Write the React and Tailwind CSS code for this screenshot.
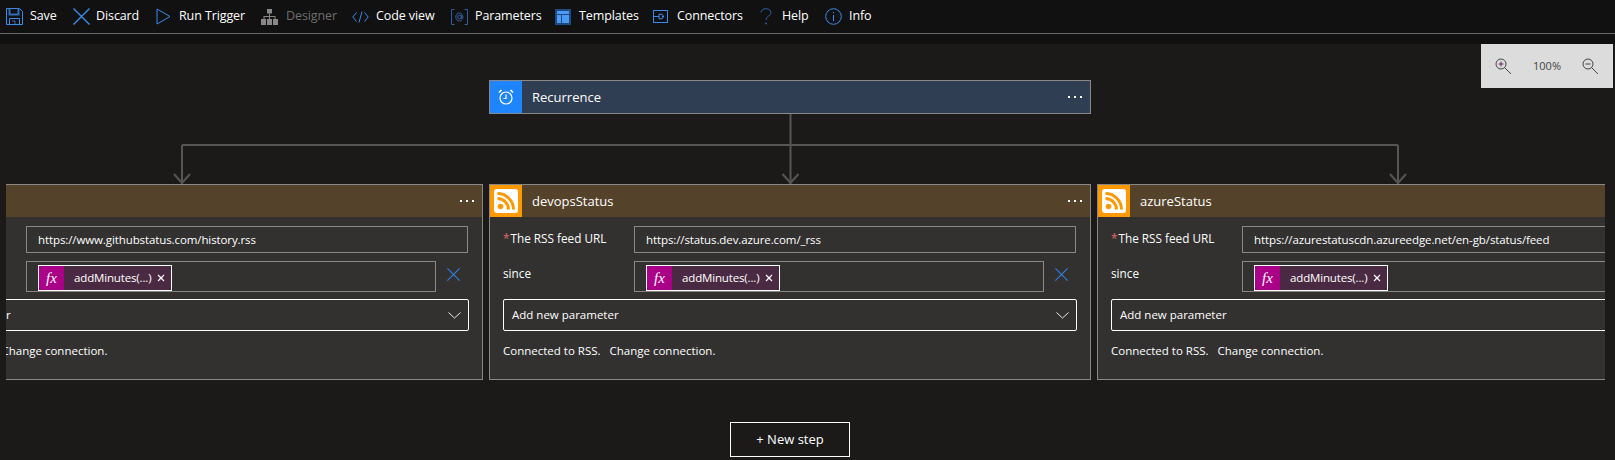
import React from "react";

const font = "font-['Open_Sans','Noto_Sans',sans-serif]";

function SaveIcon() {
  return (
    <svg width="17" height="17" viewBox="0 0 17 17" fill="none" stroke="#3c8aea" strokeWidth="1">
      <path d="M0.5 0.5H13.5L16.5 3.5V16.5H0.5Z" />
      <path d="M3.5 0.5V6.5H12.5V0.5" stroke="#2f6db8" strokeWidth="2" />
      <path d="M3.5 16.5V10.5H13.5V16.5" />
      <path d="M6 13H9V16" stroke="#2f6db8" />
    </svg>
  );
}

function CloseIcon({ size = 17, color = "#3c8aea" }) {
  return (
    <svg width={size} height={size} viewBox="0 0 17 17" stroke={color} strokeWidth="1.4" fill="none">
      <path d="M0.5 0.5L16.5 16.5M16.5 0.5L0.5 16.5" />
    </svg>
  );
}

function RunIcon() {
  return (
    <svg width="15" height="17" viewBox="0 0 15 17" stroke="#3c8aea" fill="none">
      <path d="M1 1L14 8.5L1 16Z" />
    </svg>
  );
}

function DesignerIcon() {
  return (
    <svg width="17" height="16" viewBox="0 0 17 16" fill="#8a8886">
      <rect x="6" y="0" width="5" height="4.5" />
      <rect x="0" y="10" width="5" height="6" />
      <rect x="6" y="10" width="5" height="6" />
      <rect x="12" y="10" width="5" height="6" />
      <path d="M8 4.5H9V7H14.5V10H13.5V8H9V10H8V8H3.5V10H2.5V7H8Z" />
    </svg>
  );
}

function CodeIcon() {
  return (
    <svg width="17" height="12" viewBox="0 0 17 12" stroke="#3c8aea" fill="none">
      <path d="M4.5 1.5L0.8 6L4.5 10.5M12.5 1.5L16.2 6L12.5 10.5M10 0.5L7 11.5" />
    </svg>
  );
}

function ParamsIcon() {
  return (
    <svg width="17" height="16" viewBox="0 0 17 16" stroke="#2f5f9f" fill="none">
      <path d="M3.5 0.5H0.5V15.5H3.5M13.5 0.5H16.5V15.5H13.5" />
      <circle cx="8.5" cy="8" r="1.8" />
      <path d="M10.3 6V9.5C10.3 10.5 12 10.5 12 8.5C12 6 10.5 4 8.5 4C6.3 4 4.8 6 4.8 8C4.8 10.2 6.3 12 8.5 12C9.5 12 10.2 11.7 10.8 11.3" />
    </svg>
  );
}

function TemplatesIcon() {
  return (
    <svg width="16" height="16" viewBox="0 0 16 16">
      <rect width="16" height="16" fill="#1f4a80" />
      <rect x="2" y="2" width="12" height="3" fill="#4a9bf5" />
      <rect x="2" y="6" width="4" height="8" fill="#4a9bf5" />
      <rect x="7" y="6" width="7" height="8" fill="#4a9bf5" />
    </svg>
  );
}

function ConnectorsIcon() {
  return (
    <svg width="15" height="13" viewBox="0 0 15 13" stroke="#3c8aea" fill="none">
      <rect x="0.5" y="0.5" width="14" height="12" />
      <path d="M1 6.5H6M9 6.5H11" />
      <path d="M6 4.2H8A2.3 2.3 0 0 1 8 8.8H6Z" />
    </svg>
  );
}

function HelpIcon() {
  return (
    <svg width="12" height="17" viewBox="0 0 12 17" stroke="#2f5f9f" fill="none">
      <path d="M1 4.5C1 2.2 3.2 0.7 6 0.7C8.8 0.7 11 2.3 11 4.6C11 8 6 8 6 12" />
      <circle cx="6" cy="15.5" r="0.6" fill="#2f5f9f" />
    </svg>
  );
}

function InfoIcon() {
  return (
    <svg width="17" height="17" viewBox="0 0 17 17" stroke="#3c8aea" fill="none">
      <circle cx="8.5" cy="8.5" r="7.8" />
      <path d="M8.5 7V13M8.5 4V5.2" />
    </svg>
  );
}

const tools = [
  { label: "Save", icon: <SaveIcon />, cls: "w-[67px] gap-[7px]" },
  { label: "Discard", icon: <CloseIcon />, cls: "w-[83px] gap-[6px]" },
  { label: "Run Trigger", icon: <RunIcon />, cls: "w-[105px] gap-[8px]" },
  { label: "Designer", icon: <DesignerIcon />, cls: "w-[91px] gap-[8px] text-[#6e6e6e]" },
  { label: "Code view", icon: <CodeIcon />, cls: "w-[99px] gap-[7px]" },
  { label: "Parameters", icon: <ParamsIcon />, cls: "w-[104px] gap-[7px]" },
  { label: "Templates", icon: <TemplatesIcon />, cls: "w-[98px] gap-[8px]" },
  { label: "Connectors", icon: <ConnectorsIcon />, cls: "w-[107px] gap-[9px]" },
  { label: "Help", icon: <HelpIcon />, cls: "w-[65px] gap-[10px]" },
  { label: "Info", icon: <InfoIcon />, cls: "gap-[7px]" },
];

function Dots() {
  return (
    <div className="flex gap-[4px]">
      <span className="w-[2px] h-[2px] bg-white" />
      <span className="w-[2px] h-[2px] bg-white" />
      <span className="w-[2px] h-[2px] bg-white" />
    </div>
  );
}

function RssIcon() {
  return (
    <svg width="24" height="24" viewBox="0 0 24 24">
      <rect width="24" height="24" rx="3" fill="#ffffff" />
      <circle cx="6.5" cy="17.5" r="2.8" fill="#ff9900" />
      <path d="M3.5 9.5A11 11 0 0 1 14.5 20.5M3.5 4.5A16 16 0 0 1 19.5 20.5" stroke="#ff9900" strokeWidth="3" fill="none" />
    </svg>
  );
}

function ClockIcon() {
  return (
    <svg width="16" height="16" viewBox="0 0 16 16" fill="none" stroke="#ffffff" strokeWidth="1.2">
      <circle cx="8" cy="9" r="6" />
      <path d="M8 5.5V9.5H5.5" />
      <path d="M1 3.5L3.5 1M15 3.5L12.5 1" strokeWidth="1.6" />
    </svg>
  );
}

function StatusCard({ title, url, showMenu, className }) {
  return (
    <div className={`w-[602px] h-[196px] shrink-0 border border-[#8a8886] bg-[#323130] flex flex-col ${className || ""}`}>
      <div className="h-[32px] shrink-0 bg-[#54432a] flex items-center">
        <div className="w-[32px] h-[32px] bg-[#ff9900] flex items-center justify-center">
          <RssIcon />
        </div>
        <span className="ml-[10px] pt-[1px] text-[13px] text-white">{title}</span>
        {showMenu && (
          <div className="ml-auto mr-[8px]">
            <Dots />
          </div>
        )}
      </div>
      <div className="flex flex-col pl-[13px] pr-[14px] pt-[9px] text-[11.5px] text-white">
        <div className="flex items-center h-[27px]">
          <div className="w-[131px] -mt-[1px] text-[11.75px] whitespace-nowrap">
            <span className="text-[#e8686a] mr-[1px]">*</span>The RSS feed URL
          </div>
          <div className="flex-1 h-[27px] border border-[#8a8886] flex items-center pl-[11px] text-[11.5px] tracking-[-0.1px]">{url}</div>
        </div>
        <div className="flex items-center h-[31px] mt-[8px]">
          <div className="w-[131px] -mt-[5px] text-[11.75px]">since</div>
          <div className="w-[410px] h-[31px] border border-[#8a8886] pl-[11px] pt-[3px]">
            <div className="w-[134px] h-[26px] border border-white bg-[#4a2a42] flex items-center">
              <div className="w-[25px] h-full bg-[#aa0088] flex items-center justify-center font-['Liberation_Serif',serif] italic text-[15px]">
                fx
              </div>
              <span className="ml-[10px] text-[11.5px] tracking-[-0.15px]">addMinutes(...)</span>
              <svg className="ml-auto mr-[6px]" width="8" height="8" viewBox="0 0 8 8" stroke="#ffffff" strokeWidth="1.2">
                <path d="M1 1L7 7M7 1L1 7" />
              </svg>
            </div>
          </div>
          <div className="ml-[11px] -mt-[5px]">
            <CloseIcon size={13} color="#2f80e8" />
          </div>
        </div>
        <div className="mt-[7px] h-[32px] w-[574px] rounded-[2px] border border-white flex items-center justify-between pl-[8px] pr-[7px]">
          <span>Add new parameter</span>
          <svg width="13" height="7" viewBox="0 0 13 7" stroke="#e8e8e8" fill="none">
            <path d="M0.5 0.5L6.5 6L12.5 0.5" />
          </svg>
        </div>
        <div className="mt-[11px] whitespace-pre">Connected to RSS.   Change connection.</div>
      </div>
    </div>
  );
}

export default function App() {
  return (
    <div className={`${font} w-[1615px] h-[460px] overflow-hidden bg-[#1b1a19] flex flex-col relative`}>
      <div className="h-[34px] shrink-0 bg-[#111111] border-b border-[#666666] flex items-center pl-[6px] text-[12.5px] tracking-[-0.1px] text-white">
        {tools.map((t) => (
          <div key={t.label} className={`flex items-center shrink-0 ${t.cls}`}>
            {t.icon}
            <span>{t.label}</span>
          </div>
        ))}
      </div>
      <div className="h-[10px] shrink-0 bg-[#111111]" />

      {/* zoom controls sit over the canvas */}
      <div className="absolute left-[1481px] top-[44px] w-[132px] h-[44px] bg-[#dcdcdc] flex items-center justify-between pl-[14px] pr-[14px] text-[11px] text-[#444444]">
        <svg width="17" height="17" viewBox="0 0 17 17" fill="none" stroke="#444444">
          <circle cx="6" cy="6" r="5" />
          <path d="M9.5 9.5L16 16" />
          <path d="M3.5 6H8.5M6 3.5V8.5" stroke="#6b1f6b" />
        </svg>
        <span>100%</span>
        <svg width="17" height="17" viewBox="0 0 17 17" fill="none" stroke="#444444">
          <circle cx="6" cy="6" r="5" />
          <path d="M9.5 9.5L16 16M3.5 6H8.5" />
        </svg>
      </div>

      <div className="mt-[36px] ml-[489px] w-[602px] h-[34px] border border-[#8a8886] bg-[#2f3e52] flex items-center">
        <div className="w-[32px] h-full bg-[#1f85ff] flex items-center justify-center">
          <ClockIcon />
        </div>
        <span className="ml-[10px] pt-[1px] text-[13px] text-white">Recurrence</span>
        <div className="ml-auto mr-[8px]">
          <Dots />
        </div>
      </div>

      <svg className="shrink-0" width="1615" height="70" viewBox="0 0 1615 70" fill="none" stroke="#555555" strokeWidth="2">
        <path d="M790.5 0V70M182 31H1398M182 31V70M1398 31V70" />
        <path d="M174 60L182 69L190 60M782.5 60L790.5 69L798.5 60M1390 60L1398 69L1406 60" />
      </svg>

      <div className="ml-[6px] w-[1599px] overflow-hidden shrink-0">
        <div className="flex gap-[6px] ml-[-125px]">
          <StatusCard title="githubStatus" url="https://www.githubstatus.com/history.rss" showMenu />
          <StatusCard title="devopsStatus" url="https://status.dev.azure.com/_rss" showMenu />
          <StatusCard title="azureStatus" url="https://azurestatuscdn.azureedge.net/en-gb/status/feed" />
        </div>
      </div>

      <button className="mt-[42px] ml-[730px] w-[120px] h-[35px] shrink-0 border border-white text-[13px] text-white">
        + New step
      </button>
    </div>
  );
}
